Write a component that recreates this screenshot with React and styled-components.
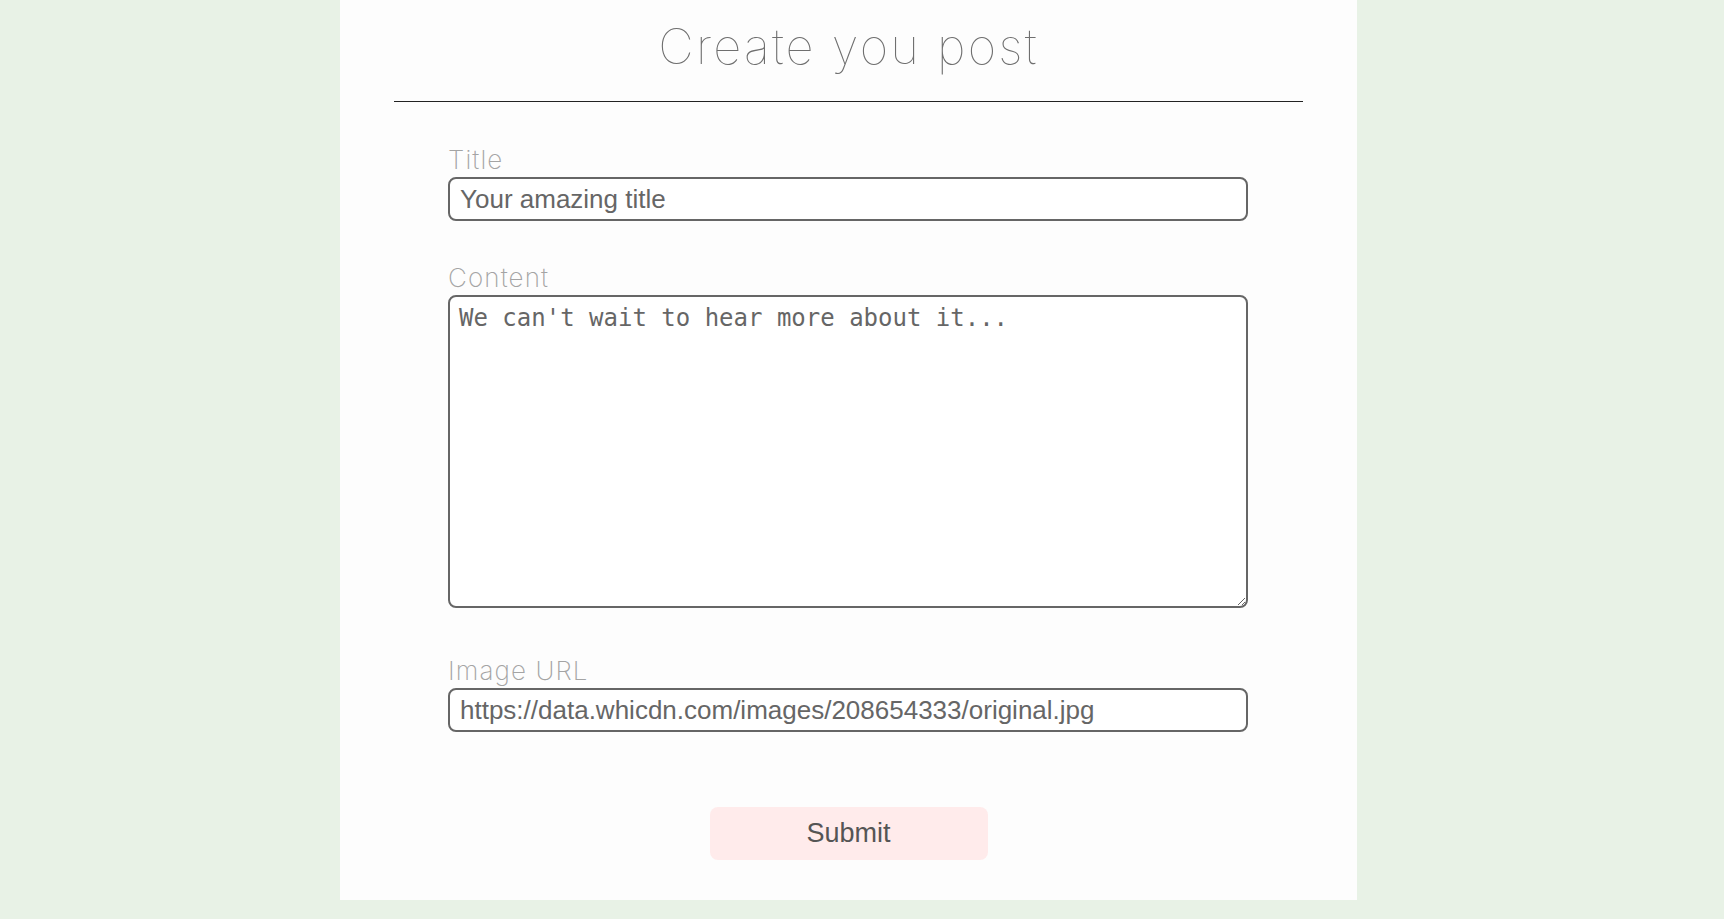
import React from "react"
import styled, { createGlobalStyle } from "styled-components"

const GlobalStyle = createGlobalStyle`
    body {
        margin: 0;
        background-color: #e8f2e6;
        font-family: "Liberation Sans", Arial, sans-serif;
    }
`

const Page = styled.div`
    min-height: 919px;
`

const Panel = styled.main`
    width: 1017px;
    margin-left: 340px;
    box-sizing: border-box;
    padding: 0 54px 40px;
    background-color: #fdfdfd;
`

const Header = styled.header`
    padding: 18px 0 25px;
    border-bottom: 1px solid #222;
    text-align: center;
`

const Heading = styled.h1`
    margin: 0;
    font-family: Inter, "Liberation Sans", sans-serif;
    font-weight: 100;
    font-size: 49px;
    line-height: 58px;
    color: #6f6f6f;
    letter-spacing: 2.2px;
`

const Form = styled.form`
    padding: 43px 54px 0;
    display: flex;
    flex-direction: column;
`

const Field = styled.div`
    display: flex;
    flex-direction: column;
    margin-bottom: ${props => props.$after}px;
`

const Label = styled.label`
    font-family: Inter, "Liberation Sans", sans-serif;
    font-weight: 200;
    font-size: 26px;
    line-height: 30px;
    color: #a4a4a4;
    letter-spacing: 1.1px;
    margin-bottom: 2px;
`

const TextInput = styled.input`
    width: 800px;
    height: 44px;
    box-sizing: border-box;
    padding: 0 10px;
    border: 2px solid #666;
    border-radius: 8px;
    background: #fff;
    font-family: "Liberation Sans", Arial, sans-serif;
    font-size: 26px;
    color: #555;
    outline: none;

    &::placeholder {
        color: #666;
    }
`

const TextArea = styled.textarea`
    display: block;
    width: 800px;
    height: 313px;
    box-sizing: border-box;
    padding: 7px 9px;
    border: 2px solid #666;
    border-radius: 8px;
    background: #fff;
    font-family: "DejaVu Sans Mono", monospace;
    font-size: 24px;
    color: #555;
    outline: none;

    &::placeholder {
        color: #666;
    }
`

const Submit = styled.button`
    align-self: center;
    width: 278px;
    height: 53px;
    border: 0;
    border-radius: 8px;
    background-color: #ffebeb;
    font-family: "Liberation Sans", Arial, sans-serif;
    font-size: 27px;
    color: #555;
    cursor: pointer;
`

const App = () => {
    return (
        <Page>
            <GlobalStyle />
            <Panel>
                <Header>
                    <Heading>Create you post</Heading>
                </Header>
                <Form onSubmit={e => e.preventDefault()}>
                    <Field $after={42}>
                        <Label htmlFor="title">Title</Label>
                        <TextInput id="title" placeholder="Your amazing title" />
                    </Field>
                    <Field $after={48}>
                        <Label htmlFor="content">Content</Label>
                        <TextArea id="content" placeholder="We can't wait to hear more about it..." />
                    </Field>
                    <Field $after={75}>
                        <Label htmlFor="image">Image URL</Label>
                        <TextInput id="image" placeholder="https://data.whicdn.com/images/208654333/original.jpg" />
                    </Field>
                    <Submit type="submit">Submit</Submit>
                </Form>
            </Panel>
        </Page>
    )
}

export default App
